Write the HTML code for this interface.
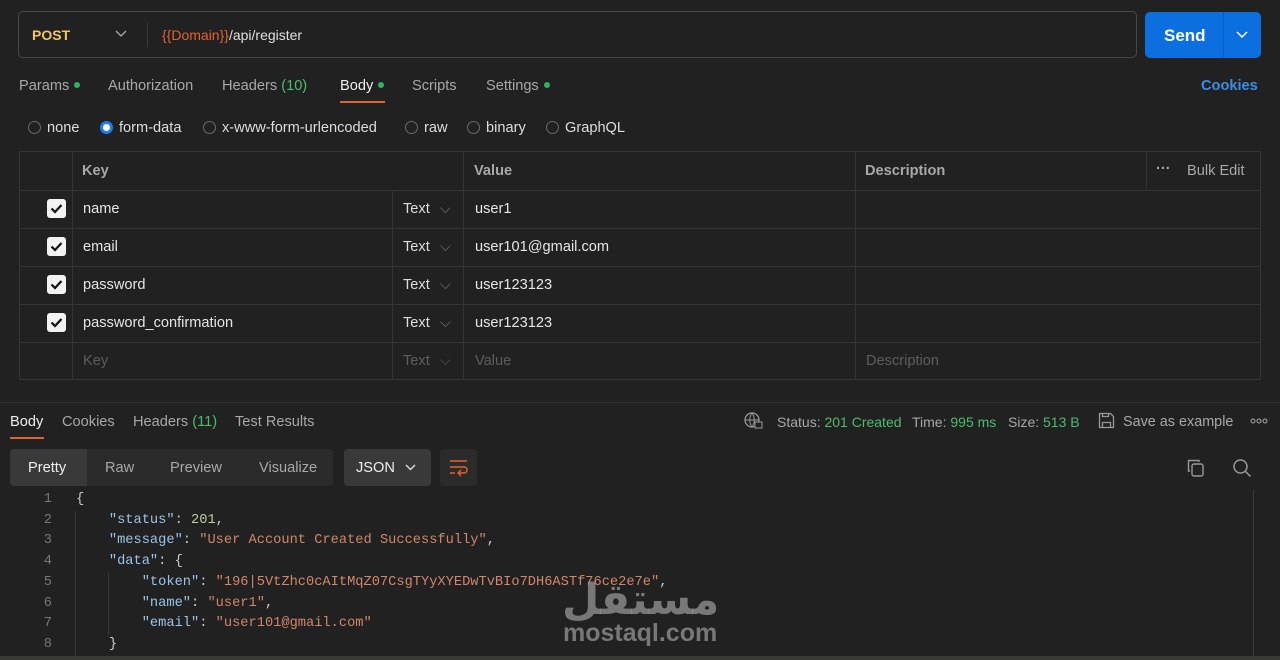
<!DOCTYPE html>
<html><head><meta charset="utf-8"><style>
*{box-sizing:border-box;margin:0;padding:0}
body{width:1280px;height:660px;background:#212121;font-family:"Liberation Sans",sans-serif;color:#c8c8c8;position:relative;overflow:hidden;font-size:14.6px}
.a{position:absolute;white-space:nowrap}
.g{color:#4bbd6e}
.dot{display:inline-block;width:6px;height:6px;border-radius:50%;background:#2fb35e;margin-left:5px;vertical-align:2px}
.radio{display:inline-block;width:13px;height:13px;border:1px solid #6a6a6a;border-radius:50%;vertical-align:-2px;margin-right:6px}
.tbl{position:absolute;left:19px;top:151px;width:1242px;height:229px;border:1px solid #353535}
.hl{position:absolute;left:0;right:0;height:1px;background:#353535}
.vl{position:absolute;top:0;bottom:0;width:1px;background:#353535}
.cb{position:absolute;left:28px;width:19px;height:19px;background:#f2f2f2;border-radius:3px}
.cb svg{position:absolute;left:3px;top:4px}
.mono{font-family:"Liberation Mono",monospace;font-size:13.7px}
.k{color:#9cc3e6}.s{color:#d0876a}.n{color:#b6cfa3}
</style></head><body>
<div class="a" style="left:18px;top:11px;width:1119px;height:47px;border:1px solid #484848;border-radius:5px"></div>
<div class="a" style="left:32px;top:27px;font-weight:bold;color:#f0c75a;font-size:14px">POST</div>
<svg class="a" style="left:115px;top:30px" width="12" height="8"><path d="M1 1l5 5 5-5" stroke="#aaa" fill="none" stroke-width="1.3"/></svg>
<div class="a" style="left:147px;top:22px;width:1px;height:25px;background:#3a3a3a"></div>
<div class="a" style="left:162px;top:27px;color:#e0e0e0;font-size:14px"><span style="color:#e4622e">{{Domain}}</span>/api/register</div>
<div class="a" style="left:1145px;top:12px;width:116px;height:46px;background:#0c6fe0;border-radius:5px"></div>
<div class="a" style="left:1223px;top:12px;width:1px;height:46px;background:#0a5cbc"></div>
<div class="a" style="left:1164px;top:26px;font-weight:bold;color:#fff;font-size:17px">Send</div>
<svg class="a" style="left:1236px;top:31px" width="12" height="8"><path d="M1 1l5 5 5-5" stroke="#fff" fill="none" stroke-width="1.5"/></svg>
<div class="a" style="left:19px;top:78px;color:#a8a8a8">Params<span class="dot"></span></div>
<div class="a" style="left:108px;top:78px;color:#a8a8a8">Authorization</div>
<div class="a" style="left:222px;top:78px;color:#a8a8a8">Headers <span class="g">(10)</span></div>
<div class="a" style="left:340px;top:78px;color:#eee">Body<span class="dot"></span></div>
<div class="a" style="left:340px;top:101px;width:45px;height:2px;background:#e4622e"></div>
<div class="a" style="left:412px;top:78px;color:#a8a8a8">Scripts</div>
<div class="a" style="left:486px;top:78px;color:#a8a8a8">Settings<span class="dot"></span></div>
<div class="a" style="left:1201px;top:78px;color:#3a8ee6;font-weight:bold">Cookies</div>
<div class="a" style="left:28px;top:120px;color:#ddd"><span class="radio"></span>none</div>
<div class="a" style="left:100px;top:120px;color:#ddd"><span class="radio" style="border:3px solid #1a7ef0;background:#fff"></span>form-data</div>
<div class="a" style="left:203px;top:120px;color:#ddd"><span class="radio"></span>x-www-form-urlencoded</div>
<div class="a" style="left:405px;top:120px;color:#ddd"><span class="radio"></span>raw</div>
<div class="a" style="left:467px;top:120px;color:#ddd"><span class="radio"></span>binary</div>
<div class="a" style="left:546px;top:120px;color:#ddd"><span class="radio"></span>GraphQL</div>
<div class="tbl">
<div class="hl" style="top:38px"></div><div class="hl" style="top:76px"></div><div class="hl" style="top:114px"></div><div class="hl" style="top:152px"></div><div class="hl" style="top:190px"></div>
<div class="vl" style="left:52px"></div><div class="vl" style="left:372px;top:38px"></div><div class="vl" style="left:443px"></div><div class="vl" style="left:835px"></div><div class="vl" style="left:1126px;bottom:190px"></div>
<div class="a" style="left:62px;top:11px;color:#a8a8a8;font-weight:bold">Key</div>
<div class="a" style="left:454px;top:11px;color:#a8a8a8;font-weight:bold">Value</div>
<div class="a" style="left:845px;top:11px;color:#a8a8a8;font-weight:bold">Description</div>
<div class="a" style="left:1136px;top:9px;color:#a8a8a8;font-weight:bold">···</div>
<div class="a" style="left:1167px;top:11px;color:#a8a8a8">Bulk Edit</div>
</div>
<div class="cb" style="left:47px;top:199px"><svg width="13" height="11"><path d="M1.5 5.5l3.5 3.5 6.5-7" stroke="#111" stroke-width="2.2" fill="none"/></svg></div>
<div class="cb" style="left:47px;top:237px"><svg width="13" height="11"><path d="M1.5 5.5l3.5 3.5 6.5-7" stroke="#111" stroke-width="2.2" fill="none"/></svg></div>
<div class="cb" style="left:47px;top:275px"><svg width="13" height="11"><path d="M1.5 5.5l3.5 3.5 6.5-7" stroke="#111" stroke-width="2.2" fill="none"/></svg></div>
<div class="cb" style="left:47px;top:313px"><svg width="13" height="11"><path d="M1.5 5.5l3.5 3.5 6.5-7" stroke="#111" stroke-width="2.2" fill="none"/></svg></div>
<div class="a" style="left:83px;top:201px;color:#e6e6e6">name</div>
<div class="a" style="left:83px;top:239px;color:#e6e6e6">email</div>
<div class="a" style="left:83px;top:277px;color:#e6e6e6">password</div>
<div class="a" style="left:83px;top:315px;color:#e6e6e6">password_confirmation</div>
<div class="a" style="left:83px;top:353px;color:#5d5d5d">Key</div>
<div class="a" style="left:403px;top:201px;color:#ddd">Text <span style="color:#777;margin-left:6px">⌵</span></div>
<div class="a" style="left:403px;top:239px;color:#ddd">Text <span style="color:#777;margin-left:6px">⌵</span></div>
<div class="a" style="left:403px;top:277px;color:#ddd">Text <span style="color:#777;margin-left:6px">⌵</span></div>
<div class="a" style="left:403px;top:315px;color:#ddd">Text <span style="color:#777;margin-left:6px">⌵</span></div>
<div class="a" style="left:403px;top:353px;color:#5d5d5d">Text <span style="margin-left:6px">⌵</span></div>
<div class="a" style="left:475px;top:201px;color:#e6e6e6">user1</div>
<div class="a" style="left:475px;top:239px;color:#e6e6e6">user101@gmail.com</div>
<div class="a" style="left:475px;top:277px;color:#e6e6e6">user123123</div>
<div class="a" style="left:475px;top:315px;color:#e6e6e6">user123123</div>
<div class="a" style="left:475px;top:353px;color:#5d5d5d">Value</div>
<div class="a" style="left:866px;top:353px;color:#5d5d5d">Description</div>
<div class="a" style="left:0;top:402px;width:1280px;height:1px;background:#303030"></div>
<div class="a" style="left:10px;top:414px;color:#eee">Body</div>
<div class="a" style="left:10px;top:437px;width:34px;height:2px;background:#e4622e"></div>
<div class="a" style="left:62px;top:414px;color:#a8a8a8">Cookies</div>
<div class="a" style="left:133px;top:414px;color:#a8a8a8">Headers <span class="g">(11)</span></div>
<div class="a" style="left:235px;top:414px;color:#a8a8a8">Test Results</div>
<svg class="a" style="left:744px;top:412px" width="20" height="18"><circle cx="8" cy="8" r="7" stroke="#999" fill="none" stroke-width="1.3"/><path d="M1 8h14M8 1c-3 4-3 10 0 14M8 1c3 4 3 10 0 14" stroke="#999" fill="none"/><rect x="11" y="10" width="7" height="6" fill="#212121" stroke="#999"/></svg>
<div class="a" style="left:777px;top:414px;color:#a8a8a8;font-size:14px">Status: <span class="g">201 Created</span></div>
<div class="a" style="left:912px;top:414px;color:#a8a8a8;font-size:14px">Time: <span class="g">995 ms</span></div>
<div class="a" style="left:1008px;top:414px;color:#a8a8a8;font-size:14px">Size: <span class="g">513 B</span></div>
<svg class="a" style="left:1098px;top:412px" width="17" height="17"><path d="M1.5 1.5h11l3 3v11h-14z M4.5 15.5v-5h8v5 M4.5 1.5v3h6v-3" stroke="#999" fill="none" stroke-width="1.3"/></svg>
<div class="a" style="left:1123px;top:414px;color:#a8a8a8;font-size:14.4px">Save as example</div>
<svg class="a" style="left:1250px;top:418px" width="18" height="6"><circle cx="3" cy="3" r="2" stroke="#aaa" fill="none"/><circle cx="9" cy="3" r="2" stroke="#aaa" fill="none"/><circle cx="15" cy="3" r="2" stroke="#aaa" fill="none"/></svg>
<div class="a" style="left:10px;top:449px;width:323px;height:37px;background:#2b2b2b;border-radius:4px"></div>
<div class="a" style="left:10px;top:449px;width:77px;height:37px;background:#393939;border-radius:4px 0 0 4px"></div>
<div class="a" style="left:28px;top:460px;color:#eee">Pretty</div>
<div class="a" style="left:105px;top:460px;color:#a8a8a8">Raw</div>
<div class="a" style="left:170px;top:460px;color:#a8a8a8">Preview</div>
<div class="a" style="left:259px;top:460px;color:#a8a8a8">Visualize</div>
<div class="a" style="left:344px;top:449px;width:87px;height:37px;background:#393939;border-radius:4px"></div>
<div class="a" style="left:356px;top:460px;color:#eee">JSON</div>
<svg class="a" style="left:405px;top:464px" width="11" height="7"><path d="M1 1l4.5 4.5 4.5-4.5" stroke="#ddd" fill="none" stroke-width="1.4"/></svg>
<div class="a" style="left:440px;top:449px;width:37px;height:37px;background:#2b2b2b;border-radius:4px"></div>
<svg class="a" style="left:449px;top:459px" width="20" height="18"><path d="M1 2h17M1 8h14a3 3 0 0 1 0 6h-5M12 11l-3 3 3 3M1 14h5" stroke="#e4622e" fill="none" stroke-width="1.4"/></svg>
<svg class="a" style="left:1186px;top:458px" width="20" height="20"><path d="M4 13H2.5V2.5H13V4" stroke="#999" fill="none" stroke-width="1.4"/><rect x="6" y="6" width="11" height="12" rx="2" stroke="#999" fill="none" stroke-width="1.4"/></svg>
<svg class="a" style="left:1232px;top:458px" width="20" height="20"><circle cx="8.5" cy="8.5" r="6.5" stroke="#999" fill="none" stroke-width="1.5"/><path d="M13.5 13.5l5 5" stroke="#999" stroke-width="1.5"/></svg>
<div class="a" style="left:75px;top:511px;width:1px;height:149px;background:#3a3a3a"></div>
<div class="a" style="left:108px;top:573px;width:1px;height:62px;background:#3a3a3a"></div>
<div class="a" style="left:1253px;top:490px;width:1px;height:170px;background:#3a3a3a"></div>
<div class="a" style="left:0;top:656px;width:1280px;height:4px;background:#3a3a35"></div>
<div class="a mono" style="left:0;top:490px;width:52px;text-align:right;color:#777;line-height:20.7px">1<br>2<br>3<br>4<br>5<br>6<br>7<br>8</div>
<div class="a mono" style="left:76px;top:490px;color:#ccc;line-height:20.7px;white-space:pre">{
    <span class="k">"status"</span>: <span class="n">201</span>,
    <span class="k">"message"</span>: <span class="s">"User Account Created Successfully"</span>,
    <span class="k">"data"</span>: {
        <span class="k">"token"</span>: <span class="s">"196|5VtZhc0cAItMqZ07CsgTYyXYEDwTvBIo7DH6ASTf76ce2e7e"</span>,
        <span class="k">"name"</span>: <span class="s">"user1"</span>,
        <span class="k">"email"</span>: <span class="s">"user101@gmail.com"</span>
    }</div>
<div class="a" style="left:562px;top:569px;font-family:'Noto Sans CJK SC','DejaVu Sans',sans-serif;font-size:43px;font-weight:bold;color:rgba(150,150,150,0.75);line-height:54px">مستقل</div>
<div class="a" style="left:563px;top:619px;font-size:25px;font-weight:bold;color:rgba(150,150,150,0.75)">mostaql.com</div>
</body></html>
